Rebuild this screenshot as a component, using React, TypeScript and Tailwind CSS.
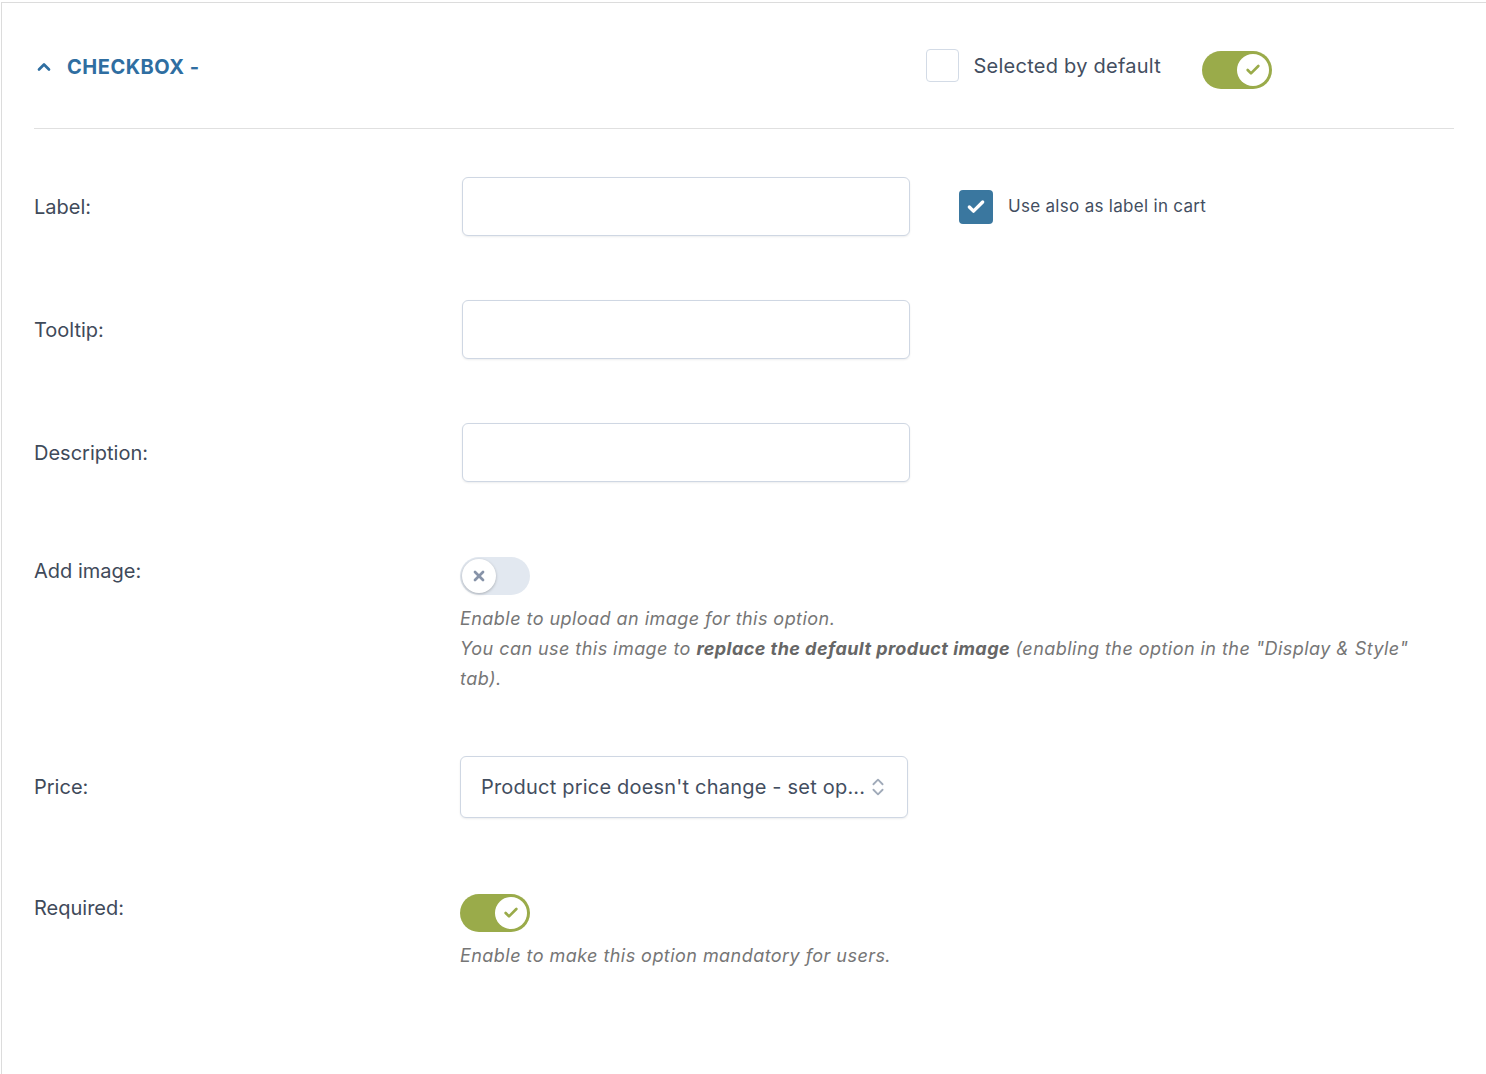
import { ChevronUp, ChevronsUpDown, Check, X } from 'lucide-react'

function Toggle({ on }: { on: boolean }) {
  if (on) {
    return (
      <div className="flex h-[38px] w-[70px] items-center justify-end rounded-full bg-[#9aab4a] pr-[3px]">
        <div className="flex h-[32px] w-[32px] items-center justify-center rounded-full bg-white">
          <Check className="h-[16px] w-[16px] text-[#9aab4a]" strokeWidth={4} />
        </div>
      </div>
    )
  }
  return (
    <div className="flex h-[38px] w-[70px] items-center rounded-full bg-[#e2e8f0] pl-[2px]">
      <div className="flex h-[34px] w-[34px] items-center justify-center rounded-full bg-white shadow-[0_1px_3px_rgba(0,0,0,0.25)]">
        <X className="h-[16px] w-[16px] text-[#8793a8]" strokeWidth={4} />
      </div>
    </div>
  )
}

function TextInput() {
  return (
    <div className="ml-[2px] h-[59px] w-[448px] rounded-[6px] border border-[#cfd7e3] bg-white shadow-[0_1px_2px_rgba(15,23,42,0.08)]" />
  )
}

function FieldLabel({ children }: { children: React.ReactNode }) {
  return <div className="w-[426px] shrink-0 text-[20px] leading-[28px] text-[#3f4a5a]">{children}</div>
}

export default function App() {
  return (
    <div className="min-h-screen bg-white font-['Inter',sans-serif]">
      <div className="ml-[1px] mt-[2px] min-h-[1072px] border-l border-t border-[#dcdcdc] px-[32px]">
        {/* header */}
        <div className="flex h-[126px] items-start justify-between border-b border-[#e0e0e0] pr-[182px] pt-[43px]">
          <div className="mt-[7px] flex items-center gap-[13px]">
            <ChevronUp className="h-[20px] w-[20px] text-[#2f6ea1]" strokeWidth={3.2} />
            <span className="text-[20px] font-bold leading-[28px] tracking-[0.5px] text-[#2f6ea1]">CHECKBOX -</span>
          </div>
          <div className="flex items-start">
            <div className="mt-[3px] h-[33px] w-[33px] rounded-[4px] border border-[#d3dbe6] bg-white" />
            <span className="ml-[14px] mt-[6px] text-[20px] leading-[28px] tracking-[0.25px] text-[#434e5f]">Selected by default</span>
            <div className="ml-[41px] mt-[5px]">
              <Toggle on />
            </div>
          </div>
        </div>

        {/* Label */}
        <div className="mt-[48px] flex items-center">
          <FieldLabel>Label:</FieldLabel>
          <TextInput />
          <div className="ml-[49px] flex items-center">
            <div className="flex h-[34px] w-[34px] items-center justify-center rounded-[4px] bg-[#3a779f]">
              <Check className="h-[20px] w-[20px] text-white" strokeWidth={4} />
            </div>
            <span className="ml-[15px] text-[17px] tracking-[0.3px] text-[#434e5f]">Use also as label in cart</span>
          </div>
        </div>

        {/* Tooltip */}
        <div className="mt-[64px] flex items-center">
          <FieldLabel>Tooltip:</FieldLabel>
          <TextInput />
        </div>

        {/* Description */}
        <div className="mt-[64px] flex items-center">
          <FieldLabel>Description:</FieldLabel>
          <TextInput />
        </div>

        {/* Add image */}
        <div className="mt-[75px] flex items-start">
          <FieldLabel>Add image:</FieldLabel>
          <div className="flex-1">
            <Toggle on={false} />
            <p className="mt-[9px] text-[18px] italic leading-[30px] tracking-[0.45px] text-[#767676]">
              Enable to upload an image for this option.
              <br />
              You can use this image to <b className="font-bold text-[#666666]">replace the default product image</b> (enabling the option in the "Display &amp; Style" tab).
            </p>
          </div>
        </div>

        {/* Price */}
        <div className="mt-[62px] flex items-center">
          <FieldLabel>Price:</FieldLabel>
          <div className="flex h-[62px] w-[448px] items-center justify-between rounded-[6px] border border-[#cfd7e3] bg-white pl-[20px] pr-[18px] shadow-[0_1px_2px_rgba(15,23,42,0.08)]">
            <span className="text-[20px] tracking-[0.2px] text-[#434e5f]">Product price doesn't change - set op...</span>
            <ChevronsUpDown className="h-[22px] w-[22px] text-[#a0aab9]" strokeWidth={2} />
          </div>
        </div>

        {/* Required */}
        <div className="mt-[76px] flex items-start">
          <FieldLabel>Required:</FieldLabel>
          <div className="flex-1">
            <Toggle on />
            <p className="mt-[9px] text-[18px] italic leading-[30px] tracking-[0.45px] text-[#767676]">
              Enable to make this option mandatory for users.
            </p>
          </div>
        </div>
      </div>
    </div>
  )
}
